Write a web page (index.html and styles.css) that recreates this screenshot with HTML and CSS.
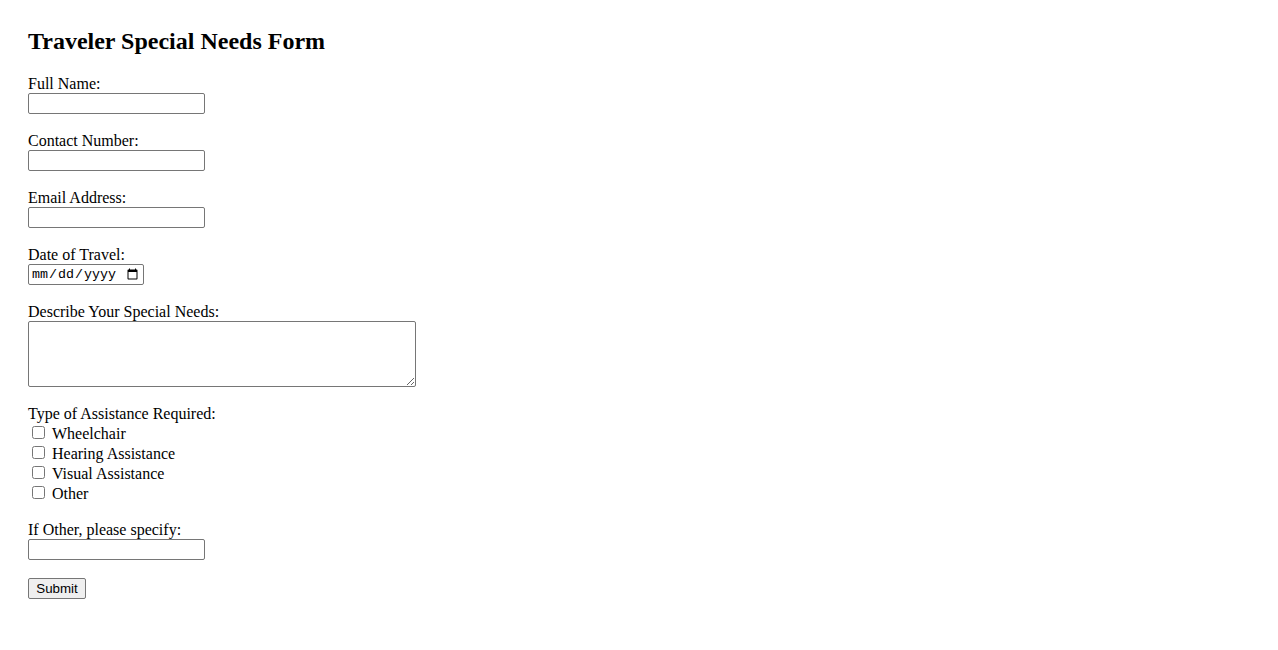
FILE: index.html
```html
<!DOCTYPE html>
<html>
<head>
<meta charset="utf-8">
<title>Traveler Special Needs Form</title>
<link rel="stylesheet" href="styles.css">
</head>
<body>
<h2 class="title">Traveler Special Needs Form</h2>
<form class="form">
  <div class="field">
    <label class="lbl" for="name">Full Name:</label>
    <input class="text" type="text" id="name">
  </div>
  <div class="field">
    <label class="lbl" for="phone">Contact Number:</label>
    <input class="text" type="tel" id="phone">
  </div>
  <div class="field">
    <label class="lbl" for="email">Email Address:</label>
    <input class="text" type="email" id="email">
  </div>
  <div class="field">
    <label class="lbl" for="date">Date of Travel:</label>
    <input class="date" type="date" id="date">
  </div>
  <div class="field">
    <label class="lbl" for="needs">Describe Your Special Needs:</label>
    <textarea class="area" id="needs"></textarea>
  </div>
  <div class="field">
    <span class="lbl">Type of Assistance Required:</span>
    <label class="check"><input type="checkbox" class="box"><span class="check-text">Wheelchair</span></label>
    <label class="check"><input type="checkbox" class="box"><span class="check-text">Hearing Assistance</span></label>
    <label class="check"><input type="checkbox" class="box"><span class="check-text">Visual Assistance</span></label>
    <label class="check"><input type="checkbox" class="box"><span class="check-text">Other</span></label>
  </div>
  <div class="field">
    <label class="lbl" for="other">If Other, please specify:</label>
    <input class="text" type="text" id="other">
  </div>
  <div class="field">
    <button class="submit" type="submit">Submit</button>
  </div>
</form>
</body>
</html>
```

FILE: styles.css
```css
html, body {
  margin: 0;
  background: #fff;
}
body {
  padding: 27px 28px 28px 28px;
  font-family: "Liberation Serif", "Times New Roman", serif;
  font-size: 16px;
  color: #000;
}
.title {
  margin: 0 0 20px 0;
  font-size: 24px;
  line-height: 28px;
  font-weight: bold;
}
.form {
  display: flex;
  flex-direction: column;
  align-items: flex-start;
}
.field {
  display: flex;
  flex-direction: column;
  align-items: flex-start;
  margin-bottom: 18px;
}
.lbl {
  display: block;
  line-height: 18px;
  height: 18px;
}
.text, .date, .area {
  box-sizing: border-box;
  margin: 0;
  border: 1px solid #767676;
  border-radius: 2px;
  background: #fff;
}
.text {
  width: 177px;
  height: 21px;
  padding: 1px 2px;
  font-family: "Liberation Sans", Arial, sans-serif;
  font-size: 13.33px;
}
.date {
  width: 116px;
  height: 21px;
  padding: 1px 2px;
  font-family: "Liberation Mono", "DejaVu Sans Mono", monospace;
  font-size: 13.33px;
}
.area {
  width: 388px;
  height: 66px;
  padding: 2px;
  font-family: "Liberation Mono", monospace;
  font-size: 13.33px;
  resize: both;
}
.check {
  display: flex;
  align-items: center;
  height: 20px;
  line-height: 20px;
}
.check-text {
  padding-top: 2px;
}
.box {
  width: 13px;
  height: 13px;
  margin: 0 7px 2px 4px;
}
.submit {
  box-sizing: border-box;
  height: 21px;
  width: 58px;
  padding: 1px 6px;
  margin: 0;
  font-family: "Liberation Sans", Arial, sans-serif;
  font-size: 13.33px;
  color: #000;
  background: #efefef;
  border: 1px solid #767676;
  border-radius: 2px;
}
```
